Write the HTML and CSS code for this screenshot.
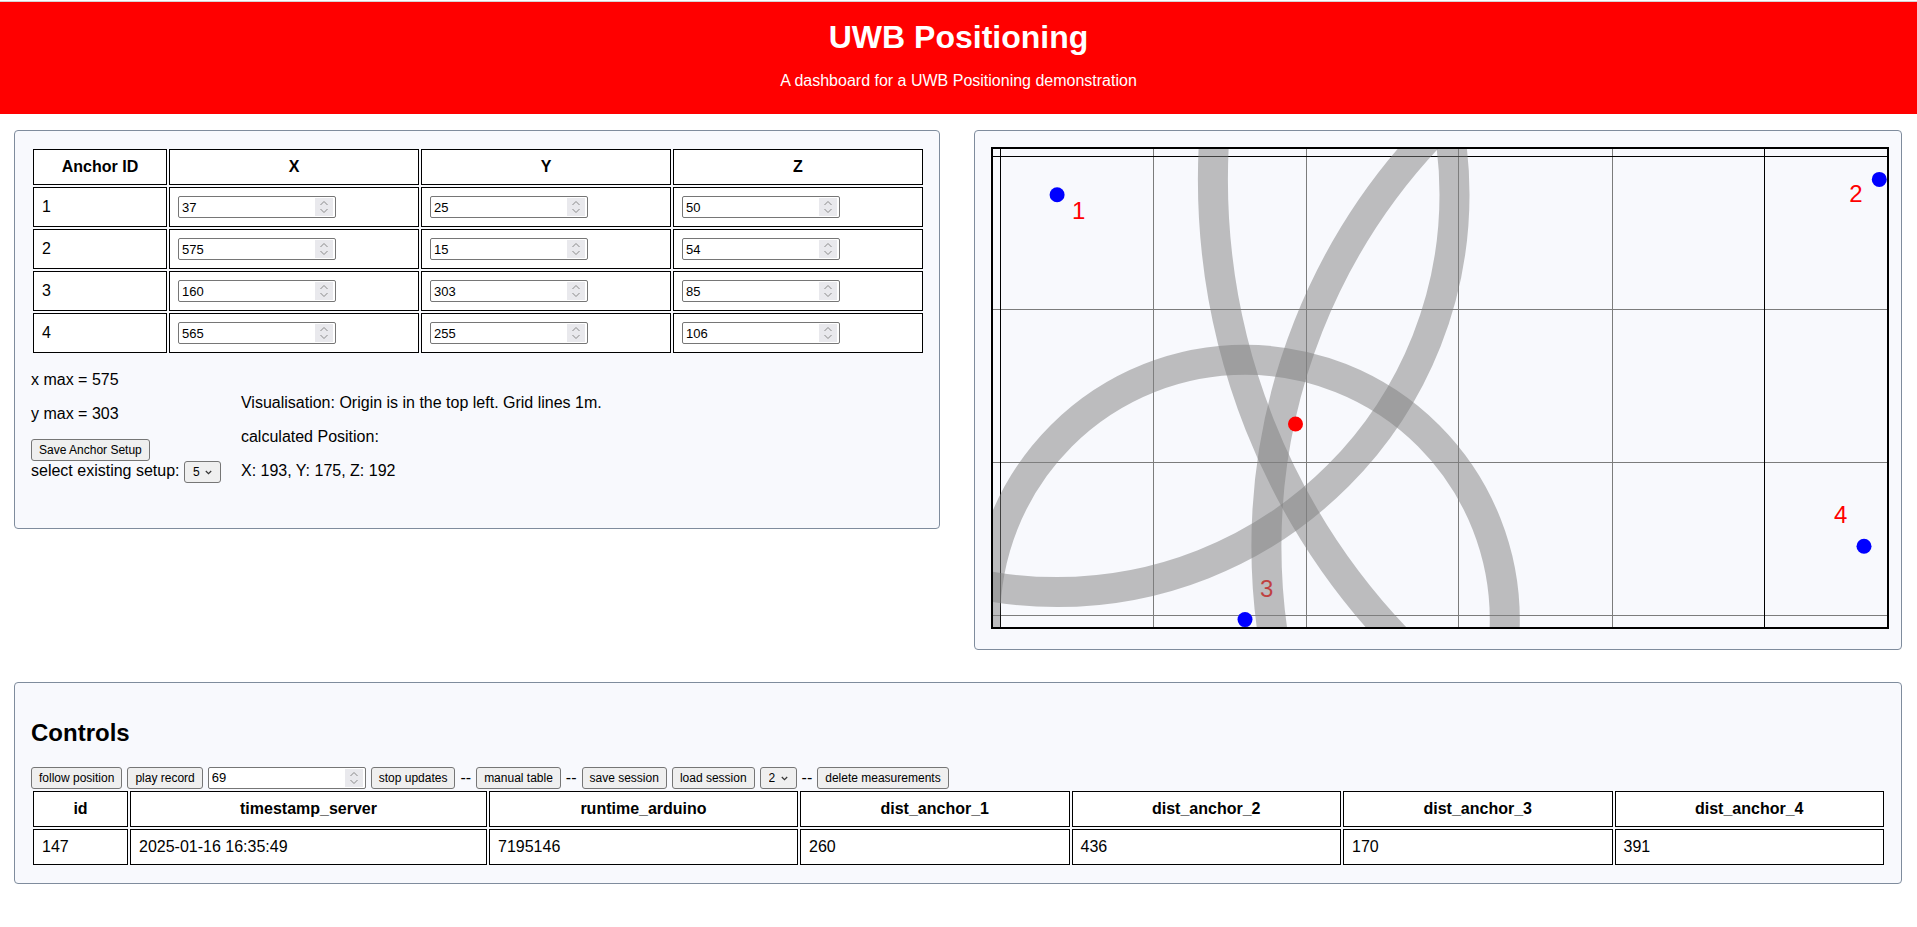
FILE: index.html
```html
<!DOCTYPE html>
<html lang="en">
<head>
<meta charset="utf-8">
<title>UWB Positioning</title>
<link rel="stylesheet" href="styles.css">
</head>
<body>
<header class="site-header">
  <h1>UWB Positioning</h1>
  <p>A dashboard for a UWB Positioning demonstration</p>
</header>

<main class="top-row">
  <section class="panel anchors">
    <table class="grid-table anchor-table">
      <thead>
        <tr><th class="col-anchor">Anchor ID</th><th>X</th><th>Y</th><th>Z</th></tr>
      </thead>
      <tbody>
        <tr>
          <td>1</td>
          <td><span class="field"><input class="num" type="number" value="37"><span class="spin"><svg width="18" height="18" viewBox="0 0 18 18"><path d="M5.5 7 L9 3.5 L12.5 7 M5.5 11 L9 14.5 L12.5 11"/></svg></span></span></td>
          <td><span class="field"><input class="num" type="number" value="25"><span class="spin"><svg width="18" height="18" viewBox="0 0 18 18"><path d="M5.5 7 L9 3.5 L12.5 7 M5.5 11 L9 14.5 L12.5 11"/></svg></span></span></td>
          <td><span class="field"><input class="num" type="number" value="50"><span class="spin"><svg width="18" height="18" viewBox="0 0 18 18"><path d="M5.5 7 L9 3.5 L12.5 7 M5.5 11 L9 14.5 L12.5 11"/></svg></span></span></td>
        </tr>
        <tr>
          <td>2</td>
          <td><span class="field"><input class="num" type="number" value="575"><span class="spin"><svg width="18" height="18" viewBox="0 0 18 18"><path d="M5.5 7 L9 3.5 L12.5 7 M5.5 11 L9 14.5 L12.5 11"/></svg></span></span></td>
          <td><span class="field"><input class="num" type="number" value="15"><span class="spin"><svg width="18" height="18" viewBox="0 0 18 18"><path d="M5.5 7 L9 3.5 L12.5 7 M5.5 11 L9 14.5 L12.5 11"/></svg></span></span></td>
          <td><span class="field"><input class="num" type="number" value="54"><span class="spin"><svg width="18" height="18" viewBox="0 0 18 18"><path d="M5.5 7 L9 3.5 L12.5 7 M5.5 11 L9 14.5 L12.5 11"/></svg></span></span></td>
        </tr>
        <tr>
          <td>3</td>
          <td><span class="field"><input class="num" type="number" value="160"><span class="spin"><svg width="18" height="18" viewBox="0 0 18 18"><path d="M5.5 7 L9 3.5 L12.5 7 M5.5 11 L9 14.5 L12.5 11"/></svg></span></span></td>
          <td><span class="field"><input class="num" type="number" value="303"><span class="spin"><svg width="18" height="18" viewBox="0 0 18 18"><path d="M5.5 7 L9 3.5 L12.5 7 M5.5 11 L9 14.5 L12.5 11"/></svg></span></span></td>
          <td><span class="field"><input class="num" type="number" value="85"><span class="spin"><svg width="18" height="18" viewBox="0 0 18 18"><path d="M5.5 7 L9 3.5 L12.5 7 M5.5 11 L9 14.5 L12.5 11"/></svg></span></span></td>
        </tr>
        <tr>
          <td>4</td>
          <td><span class="field"><input class="num" type="number" value="565"><span class="spin"><svg width="18" height="18" viewBox="0 0 18 18"><path d="M5.5 7 L9 3.5 L12.5 7 M5.5 11 L9 14.5 L12.5 11"/></svg></span></span></td>
          <td><span class="field"><input class="num" type="number" value="255"><span class="spin"><svg width="18" height="18" viewBox="0 0 18 18"><path d="M5.5 7 L9 3.5 L12.5 7 M5.5 11 L9 14.5 L12.5 11"/></svg></span></span></td>
          <td><span class="field"><input class="num" type="number" value="106"><span class="spin"><svg width="18" height="18" viewBox="0 0 18 18"><path d="M5.5 7 L9 3.5 L12.5 7 M5.5 11 L9 14.5 L12.5 11"/></svg></span></span></td>
        </tr>
      </tbody>
    </table>
    <div class="info">
      <div class="setup">
        <p>x max = 575</p>
        <p>y max = 303</p>
        <button class="btn" type="button">Save Anchor Setup</button><br>
        select existing setup: <span class="field"><select class="sel"><option>5</option></select><svg class="caret" width="7" height="5" viewBox="0 0 7 5"><path d="M0.8 1 L3.5 3.7 L6.2 1"/></svg></span>
      </div>
      <div class="status">
        <p>Visualisation: Origin is in the top left. Grid lines 1m.</p>
        <p>calculated Position:</p>
        <p>X: 193, Y: 175, Z: 192</p>
      </div>
    </div>
  </section>

  <section class="panel viz">
    <svg class="map" width="898" height="482" viewBox="0 0 898 482" xmlns="http://www.w3.org/2000/svg">
      <g stroke="#7c7c7c" stroke-width="1">
        <line x1="162.5" y1="0" x2="162.5" y2="482"/>
        <line x1="315.5" y1="0" x2="315.5" y2="482"/>
        <line x1="467.5" y1="0" x2="467.5" y2="482"/>
        <line x1="621.5" y1="0" x2="621.5" y2="482"/>
        <line x1="0" y1="162.5" x2="898" y2="162.5"/>
        <line x1="0" y1="315.5" x2="898" y2="315.5"/>
        <line x1="0" y1="468.5" x2="898" y2="468.5"/>
      </g>
      <g stroke="#000" stroke-width="1">
        <line x1="9.5" y1="0" x2="9.5" y2="482"/>
        <line x1="773.5" y1="0" x2="773.5" y2="482"/>
        <line x1="0" y1="9.5" x2="898" y2="9.5"/>
      </g>
      <g class="labels" fill="#ff0000">
        <text x="81.1" y="71.7">1</text>
        <text x="858.3" y="55.4">2</text>
        <text x="269" y="449.6">3</text>
        <text x="843" y="376.2">4</text>
      </g>
      <g fill="none" stroke="rgba(128,128,128,0.5)" stroke-width="30">
        <circle cx="66.1" cy="47.7" r="397.4"/>
        <circle cx="888.3" cy="32.4" r="666.4"/>
        <circle cx="254" cy="472.6" r="259.8"/>
        <circle cx="873" cy="399.2" r="597.6"/>
      </g>
      <g fill="#0000ff">
        <circle cx="66.1" cy="47.7" r="7.5"/>
        <circle cx="888.3" cy="32.4" r="7.5"/>
        <circle cx="254" cy="472.6" r="7.5"/>
        <circle cx="873" cy="399.2" r="7.5"/>
      </g>
      <circle cx="304.5" cy="277" r="7.5" fill="#ff0000"/>
      <rect x="1" y="1" width="896" height="480" fill="none" stroke="#000" stroke-width="2"/>
    </svg>
  </section>
</main>

<section class="panel controls">
  <h2>Controls</h2>
  <div class="toolbar">
    <button class="btn" type="button">follow position</button>
    <button class="btn" type="button">play record</button>
    <span class="field"><input class="num" type="number" value="69"><span class="spin"><svg width="18" height="18" viewBox="0 0 18 18"><path d="M5.5 7 L9 3.5 L12.5 7 M5.5 11 L9 14.5 L12.5 11"/></svg></span></span>
    <button class="btn" type="button">stop updates</button>
    <span class="sep">--</span>
    <button class="btn" type="button">manual table</button>
    <span class="sep">--</span>
    <button class="btn" type="button">save session</button>
    <button class="btn" type="button">load session</button>
    <span class="field"><select class="sel"><option>2</option></select><svg class="caret" width="7" height="5" viewBox="0 0 7 5"><path d="M0.8 1 L3.5 3.7 L6.2 1"/></svg></span>
    <span class="sep">--</span>
    <button class="btn" type="button">delete measurements</button>
  </div>
  <table class="grid-table data-table">
    <thead>
      <tr>
        <th class="col-id">id</th>
        <th class="col-ts">timestamp_server</th>
        <th class="col-rt">runtime_arduino</th>
        <th>dist_anchor_1</th>
        <th>dist_anchor_2</th>
        <th>dist_anchor_3</th>
        <th>dist_anchor_4</th>
      </tr>
    </thead>
    <tbody>
      <tr>
        <td>147</td>
        <td>2025-01-16 16:35:49</td>
        <td>7195146</td>
        <td>260</td>
        <td>436</td>
        <td>170</td>
        <td>391</td>
      </tr>
    </tbody>
  </table>
</section>
</body>
</html>
```

FILE: styles.css
```css
* {
  box-sizing: border-box;
}

html {
  background: #fff;
}

body {
  margin: 0;
  font-family: "Liberation Sans", Arial, sans-serif;
  font-size: 16px;
  color: #000;
  background: #fff;
}

.site-header {
  margin-top: 2px;
  box-shadow: 0 -1px 0 #d4d4d4;
  background: #ff0000;
  color: #fff;
  text-align: center;
  padding: 17px 0 24px;
}

.site-header h1 {
  margin: 0 0 16px;
  font-size: 32px;
  line-height: 37px;
  font-weight: bold;
}

.site-header p {
  margin: 0;
  line-height: 18px;
}

.top-row {
  display: grid;
  grid-template-columns: 926px 928px;
  column-gap: 34px;
  align-items: start;
  padding-left: 14px;
  margin-top: 16px;
}

.panel {
  background: #f8f9fd;
  border: 1px solid #7f8c9d;
  border-radius: 4px;
}

.anchors {
  padding: 16px 14px 16px 16px;
}

.viz {
  padding: 16px 12px 20px 16px;
}

.map {
  display: block;
}

.labels {
  font-family: "Liberation Sans", Arial, sans-serif;
  font-size: 24px;
}

.controls {
  margin: 32px 15px 0 14px;
  padding: 16px 15px 16px 16px;
}

.controls h2 {
  margin: 19.92px 0;
  font-size: 24px;
  font-weight: bold;
}

.grid-table {
  width: 100%;
  border-spacing: 2px;
  table-layout: fixed;
}

.grid-table th,
.grid-table td {
  border: 1px solid #000;
  padding: 8px;
  background: #fff;
  text-align: left;
  font-size: 16px;
}

.grid-table th {
  text-align: center;
  font-weight: bold;
}

.col-anchor {
  width: 134px;
}

.col-id {
  width: 95px;
}

.col-ts {
  width: 357px;
}

.col-rt {
  width: 309px;
}

.field {
  position: relative;
  display: inline-block;
}

.num {
  width: 158px;
  height: 22px;
  padding: 1px 24px 1px 3px;
  font-family: "Liberation Sans", Arial, sans-serif;
  font-size: 13px;
  color: #000;
  background: #fff;
  border: 1px solid #767676;
  border-radius: 2px;
  -moz-appearance: textfield;
}

.num::-webkit-inner-spin-button,
.num::-webkit-outer-spin-button {
  -webkit-appearance: none;
  margin: 0;
}

.spin {
  position: absolute;
  top: 2px;
  right: 3px;
  width: 18px;
  height: 18px;
  background: #e9e9ed;
}

.spin svg {
  display: block;
  fill: none;
  stroke: #8a8a8a;
  stroke-width: 1;
}

.btn {
  height: 22px;
  padding: 0 7px;
  font-family: "Liberation Sans", Arial, sans-serif;
  font-size: 12px;
  color: #000;
  background: #efefef;
  border: 1px solid #767676;
  border-radius: 3px;
}

.sel {
  -webkit-appearance: none;
  appearance: none;
  width: 37px;
  height: 22px;
  padding: 0 0 0 8px;
  font-family: "Liberation Sans", Arial, sans-serif;
  font-size: 12px;
  color: #000;
  background: #efefef;
  border: 1px solid #767676;
  border-radius: 3px;
}

.caret {
  position: absolute;
  right: 9px;
  top: 9px;
  fill: none;
  stroke: #333;
  stroke-width: 1.2;
  pointer-events: none;
}

.info {
  display: flex;
  align-items: last baseline;
  gap: 20px;
  margin-bottom: 16px;
}

.info p {
  margin: 16px 0;
}

.toolbar {
  display: flex;
  align-items: center;
  gap: 5px;
  height: 22px;
}

.sep {
  line-height: 22px;
}
```
